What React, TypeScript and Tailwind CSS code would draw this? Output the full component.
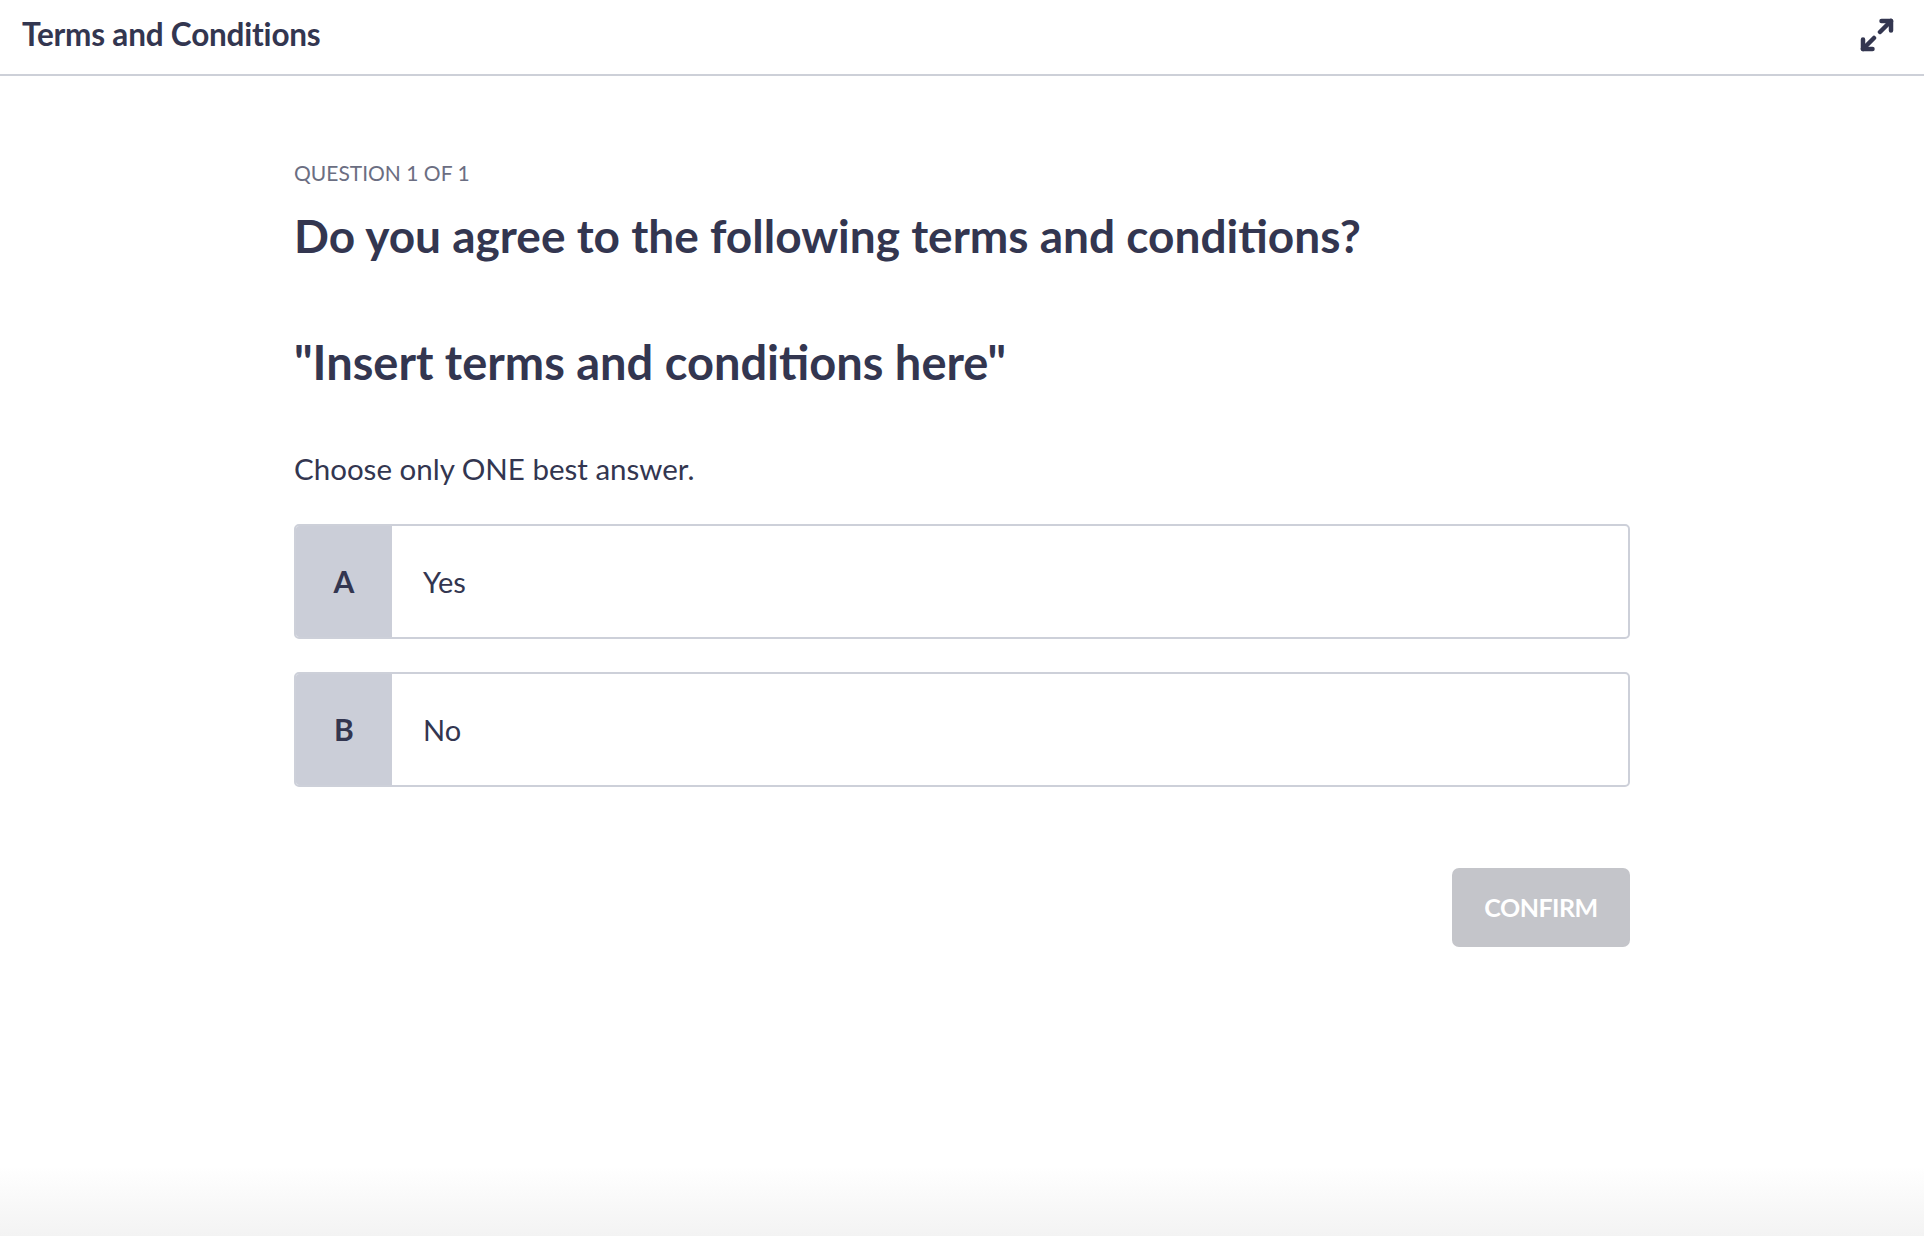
import React from "react";

function ExpandIcon() {
  return (
    <svg width="34" height="34" viewBox="0 0 34 34" fill="none" stroke="#333650" strokeWidth="4.5" strokeLinecap="round" strokeLinejoin="round">
      <path d="M31 3 L20 14" />
      <path d="M21.5 3 H31 V12.5" />
      <path d="M3 31 L14 20" />
      <path d="M3 21.5 V31 H12.5" />
    </svg>
  );
}

function Option({ letter, text }: { letter: string; text: string }) {
  return (
    <div className="flex h-[115px] rounded-[5px] border-2 border-[#cdd0d9] bg-white overflow-hidden">
      <div className="w-[96px] bg-[#cbced8] flex items-center justify-center text-[30px] font-bold text-[#333650]">
        {letter}
      </div>
      <div className="flex-1 flex items-center pl-[31px] text-[29px] text-[#333650]">{text}</div>
    </div>
  );
}

export default function App() {
  return (
    <div
      className="relative min-h-[1236px] bg-white text-[#333650]"
      style={{ fontFamily: "Lato, 'Noto Sans', sans-serif" }}
    >
      <header className="h-[76px] border-b-2 border-[#cdd0d8] flex items-center justify-between pl-[22px] pr-[30px] pb-[4px]">
        <h1 className="text-[31.5px] font-bold tracking-[-0.2px]">Terms and Conditions</h1>
        <ExpandIcon />
      </header>
      <main className="max-w-[1336px] mx-auto pt-[82px]">
        <div className="text-[21px] text-[#6b6e82] leading-[30px]">QUESTION 1 OF 1</div>
        <h2 className="mt-[20px] text-[46px] font-bold leading-[56px]">
          Do you agree to the following terms and conditions?
        </h2>
        <h2 className="mt-[70px] text-[47px] font-bold leading-[56px]">
          "Insert terms and conditions here"
        </h2>
        <p className="mt-[59px] text-[29.5px] leading-[40px]">Choose only ONE best answer.</p>
        <div className="mt-[35px] flex flex-col gap-[33px]">
          <Option letter="A" text="Yes" />
          <Option letter="B" text="No" />
        </div>
        <div className="mt-[81px] flex justify-end">
          <button className="w-[178px] h-[79px] rounded-[7px] bg-[#c4c5ca] text-white text-[25px] font-bold tracking-[-0.5px]">
            CONFIRM
          </button>
        </div>
      </main>
      <div className="absolute bottom-0 left-0 right-0 h-[70px] bg-gradient-to-b from-white to-[#f3f3f3]" />
    </div>
  );
}
